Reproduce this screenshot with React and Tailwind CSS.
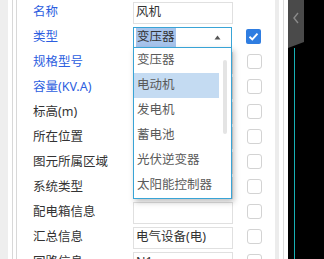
import { useState } from "react";

const rows = [
  { label: "名称", blue: true, value: "风机", noCheck: true },
  { label: "类型", blue: true, select: true, checked: true },
  { label: "规格型号", blue: true },
  { label: "容量(KV.A)", blue: true },
  { label: "标高(m)" },
  { label: "所在位置" },
  { label: "图元所属区域" },
  { label: "系统类型" },
  { label: "配电箱信息" },
  { label: "汇总信息", value: "电气设备(电)" },
  { label: "回路信息", value: "N1" },
];

const options = ["变压器", "电动机", "发电机", "蓄电池", "光伏逆变器", "太阳能控制器"];

function Checkbox({ checked }) {
  if (checked) {
    return (
      <div className="flex h-[15px] w-[15px] items-center justify-center rounded-[2px] bg-[#2f7de1]">
        <svg width="11" height="11" viewBox="0 0 11 11">
          <polyline points="1.5,5.8 4.3,8.4 9.5,2.6" fill="none" stroke="#fff" strokeWidth="1.9" />
        </svg>
      </div>
    );
  }
  return <div className="h-[15px] w-[15px] rounded-[3px] border border-[#d3d3d3] bg-white" />;
}

function TypeSelect() {
  const [active] = useState(1);
  return (
    <div className="relative h-[22px] w-[99px]">
      <div className="flex h-[22px] items-center justify-between border border-[#39a4d6] pl-[2px] pr-[10px]">
        <span className="bg-[#a7c4ec] px-[1px] text-[#333]">变压器</span>
        <svg width="7" height="5" viewBox="0 0 7 5">
          <polygon points="3.5,0.5 6.5,4.5 0.5,4.5" fill="#555" />
        </svg>
      </div>
      <div className="absolute left-0 top-[20px] z-10 w-[99px] border border-[#39a4d6] bg-white shadow-[2px_3px_6px_rgba(0,0,0,0.25)]">
        <div className="flex">
          <div className="flex w-[85px] flex-col">
            {options.map((o, i) => (
              <div
                key={o}
                className={
                  "flex h-[25px] items-center whitespace-nowrap pl-[3px] text-[#5a5a5a] " +
                  (i === active ? "bg-[#c4dbf2]" : "")
                }
              >
                {o}
              </div>
            ))}
          </div>
          <div className="flex flex-1 justify-center pt-[12px]">
            <div className="h-[74px] w-[4px] rounded-full bg-[#e4e4e4]" />
          </div>
        </div>
      </div>
    </div>
  );
}

export default function App() {
  return (
    <div
      className="flex h-[259px] w-[324px] overflow-hidden bg-white text-[12.5px]"
      style={{ fontFamily: '"Noto Sans", "Noto Sans CJK SC", sans-serif' }}
    >
      <div className="w-[8px] bg-[#eeeeee]" />
      <div className="ml-[4px] border-l border-[#d8d8d8]" />
      <div className="ml-[3px] border-l border-[#d8d8d8]" />
      <div className="flex w-[258px] flex-col pl-[16px]">
        {rows.map((r) => (
          <div key={r.label} className="flex h-[25px] shrink-0 items-center">
            <div className={"w-[100px] " + (r.blue ? "text-[#2c5ee0]" : "text-[#333]")}>{r.label}</div>
            {r.select ? (
              <TypeSelect />
            ) : (
              <div className="flex h-[22px] w-[100px] items-center border border-[#e0e0e0] pl-[2px] text-[#333]">
                {r.value}
              </div>
            )}
            {!r.noCheck && (
              <div className="ml-[14px] -mt-[2px]">
                <Checkbox checked={r.checked} />
              </div>
            )}
          </div>
        ))}
      </div>
      <div className="w-[4px] bg-[#ececec]" />
      <div className="ml-[4px] border-l border-[#dcdcdc]" />
      <div className="w-[4px]" />
      <div className="flex flex-1 bg-black">
        <div className="flex w-[16px] flex-col">
          <div className="flex h-[48px] items-start justify-center bg-[#4a4a4a] pt-[12px] [clip-path:polygon(0_0,100%_0,100%_42px,0_48px)]">
            <svg width="8" height="12" viewBox="0 0 8 12">
              <polyline points="6,1 2,6 6,11" fill="none" stroke="#8a8a8a" strokeWidth="1.4" />
            </svg>
          </div>
          <div className="ml-[6px] w-px flex-1 bg-[#17b0b4]" />
        </div>
      </div>
    </div>
  );
}
